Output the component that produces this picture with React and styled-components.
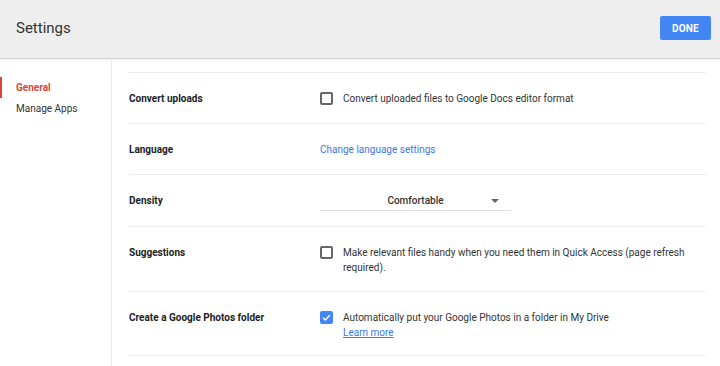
import styled, { createGlobalStyle } from 'styled-components';

const GlobalStyle = createGlobalStyle`
    html, body {
        margin: 0;
        padding: 0;
        background: #fff;
        font-family: Roboto, "Liberation Sans", Arial, sans-serif;
        color: #222;
    }
    * { box-sizing: border-box; }
`;

const Page = styled.div`
    width: 720px;
    height: 366px;
    overflow: hidden;
    display: flex;
    flex-direction: column;
`;

const Header = styled.header`
    height: 59px;
    flex-shrink: 0;
    background: #eeeeee;
    border-bottom: 1px solid #d6d6d6;
    box-shadow: 0 1px 2px rgba(0,0,0,0.08);
    display: flex;
    align-items: center;
    justify-content: space-between;
    padding: 0 9px 2px 16px;
`;

const Title = styled.h1`
    margin: 0;
    font-size: 15px;
    font-weight: 400;
    color: #333;
`;

const DoneButton = styled.button`
    background: #4285f4;
    color: #fff;
    border: none;
    border-radius: 2px;
    height: 24px;
    width: 51px;
    font-family: inherit;
    font-size: 10px;
    font-weight: 700;
    letter-spacing: 0.2px;
    cursor: pointer;
`;

const Body = styled.div`
    flex: 1;
    display: flex;
`;

const Sidebar = styled.nav`
    width: 112px;
    flex-shrink: 0;
    border-right: 1px solid #ebebeb;
    padding-top: 18px;
`;

const NavItem = styled.div`
    height: 21px;
    display: flex;
    align-items: center;
    padding-left: 14px;
    font-size: 10px;
    font-weight: ${p => (p.$active ? 700 : 400)};
    color: ${p => (p.$active ? '#db4437' : '#333')};
    border-left: 2px solid ${p => (p.$active ? '#db4437' : 'transparent')};
`;

const Content = styled.main`
    flex: 1;
    padding: 13px 14px 0 17px;
`;

const Row = styled.div`
    display: flex;
    align-items: flex-start;
    border-top: 1px solid #ececec;
    padding: 18px 0 ${p => p.$pb ?? 17}px;
`;

const Label = styled.div`
    width: 191px;
    flex-shrink: 0;
    font-size: 10px;
    font-weight: 700;
    line-height: 15px;
    color: #222;
`;

const Value = styled.div`
    flex: 1;
    display: flex;
    align-items: flex-start;
    font-size: 10px;
    line-height: 15px;
    color: #333;
`;

const Box = styled.span`
    width: 13px;
    height: 13px;
    flex-shrink: 0;
    margin: 1px 10px 0 0;
    border-radius: 2px;
    border: ${p => (p.$checked ? 'none' : '2px solid #666')};
    background: ${p => (p.$checked ? '#4285f4' : '#fff')};
    display: flex;
    align-items: center;
    justify-content: center;
`;

const Text = styled.div`
    max-width: 345px;
`;

const Link = styled.a`
    color: #3b78e7;
    text-decoration: ${p => (p.$underline ? 'underline' : 'none')};
    cursor: pointer;
`;

const Select = styled.div`
    width: 191px;
    height: 21px;
    margin: -3px 0 -2px;
    border-bottom: 1px solid #e0e0e0;
    display: flex;
    align-items: center;
    justify-content: center;
    position: relative;
    font-weight: 500;
    color: #333;
`;

const Caret = styled.span`
    position: absolute;
    right: 12px;
    top: 9px;
    width: 0;
    height: 0;
    border-left: 4px solid transparent;
    border-right: 4px solid transparent;
    border-top: 4px solid #666;
`;

const Checkbox = ({ checked }) => (
    <Box $checked={checked}>
        {checked && (
            <svg width="11" height="11" viewBox="0 0 24 24">
                <path d="M4.5 12.5l5 5 10-11" fill="none" stroke="#fff" strokeWidth="3" />
            </svg>
        )}
    </Box>
);

const App = () => {
    return (
        <Page>
            <GlobalStyle />
            <Header>
                <Title>Settings</Title>
                <DoneButton>DONE</DoneButton>
            </Header>
            <Body>
                <Sidebar>
                    <NavItem $active>General</NavItem>
                    <NavItem>Manage Apps</NavItem>
                </Sidebar>
                <Content>
                    <Row>
                        <Label>Convert uploads</Label>
                        <Value>
                            <Checkbox />
                            <Text>Convert uploaded files to Google Docs editor format</Text>
                        </Value>
                    </Row>
                    <Row>
                        <Label>Language</Label>
                        <Value>
                            <Link>Change language settings</Link>
                        </Value>
                    </Row>
                    <Row>
                        <Label>Density</Label>
                        <Value>
                            <Select>
                                Comfortable
                                <Caret />
                            </Select>
                        </Value>
                    </Row>
                    <Row $pb={16}>
                        <Label>Suggestions</Label>
                        <Value>
                            <Checkbox />
                            <Text>Make relevant files handy when you need them in Quick Access (page refresh required).</Text>
                        </Value>
                    </Row>
                    <Row $pb={15}>
                        <Label>Create a Google Photos folder</Label>
                        <Value>
                            <Checkbox checked />
                            <Text>
                                Automatically put your Google Photos in a folder in My Drive
                                <br />
                                <Link $underline>Learn more</Link>
                            </Text>
                        </Value>
                    </Row>
                    <Row />
                </Content>
            </Body>
        </Page>
    );
};

export default App;
